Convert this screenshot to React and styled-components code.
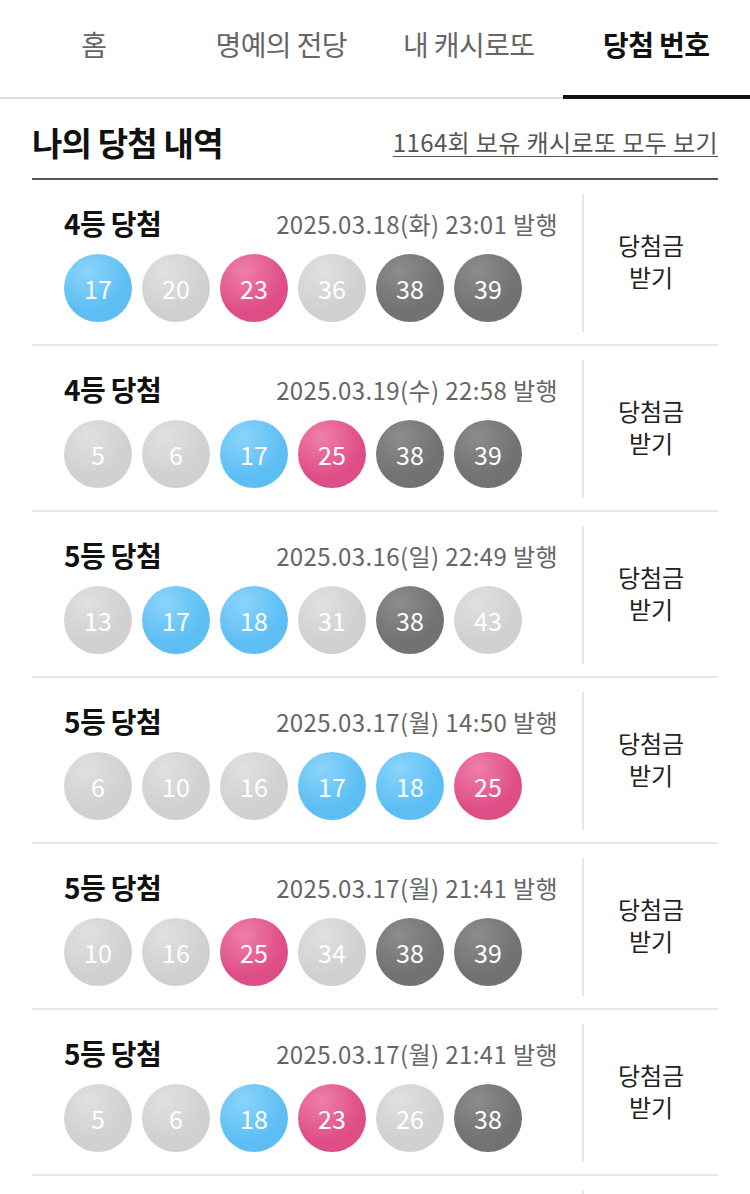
import React from 'react';
import styled, { createGlobalStyle } from 'styled-components';

const GlobalStyle = createGlobalStyle`
    * {
        box-sizing: border-box;
    }

    body {
        margin: 0;
        background: #fff;
        font-family: 'Noto Sans CJK KR', 'Noto Sans', sans-serif;
    }
`;

const tabs = ['홈', '명예의 전당', '내 캐시로또', '당첨 번호'];

const rows = [
    { rank: '4등 당첨', date: '2025.03.18(화) 23:01 발행', balls: [[17, 'blue'], [20, 'light'], [23, 'pink'], [36, 'light'], [38, 'dark'], [39, 'dark']] },
    { rank: '4등 당첨', date: '2025.03.19(수) 22:58 발행', balls: [[5, 'light'], [6, 'light'], [17, 'blue'], [25, 'pink'], [38, 'dark'], [39, 'dark']] },
    { rank: '5등 당첨', date: '2025.03.16(일) 22:49 발행', balls: [[13, 'light'], [17, 'blue'], [18, 'blue'], [31, 'light'], [38, 'dark'], [43, 'light']] },
    { rank: '5등 당첨', date: '2025.03.17(월) 14:50 발행', balls: [[6, 'light'], [10, 'light'], [16, 'light'], [17, 'blue'], [18, 'blue'], [25, 'pink']] },
    { rank: '5등 당첨', date: '2025.03.17(월) 21:41 발행', balls: [[10, 'light'], [16, 'light'], [25, 'pink'], [34, 'light'], [38, 'dark'], [39, 'dark']] },
    { rank: '5등 당첨', date: '2025.03.17(월) 21:41 발행', balls: [[5, 'light'], [6, 'light'], [18, 'blue'], [23, 'pink'], [26, 'light'], [38, 'dark']] },
];

const ballColors = {
    blue: ['#8ad4fa', '#5dbef4'],
    light: ['#e0e0e0', '#d0d0d0'],
    pink: ['#ef7fa8', '#df4d87'],
    dark: ['#8c8c8c', '#727272'],
};

function App() {
    return (
        <>
            <GlobalStyle />
            <Page>
                <TabBar>
                    {tabs.map((t, i) => (
                        <Tab key={t} $active={i === 3}>{t}</Tab>
                    ))}
                </TabBar>
                <Section>
                    <SectionHeader>
                        <SectionTitle>나의 당첨 내역</SectionTitle>
                        <AllLink>1164회 보유 캐시로또 모두 보기</AllLink>
                    </SectionHeader>
                    <List>
                        {rows.map((row, i) => (
                            <Row key={i}>
                                <RowMain>
                                    <RowTop>
                                        <Rank>{row.rank}</Rank>
                                        <IssuedAt>{row.date}</IssuedAt>
                                    </RowTop>
                                    <Balls>
                                        {row.balls.map(([n, c], j) => (
                                            <Ball key={j} $color={c}>{n}</Ball>
                                        ))}
                                    </Balls>
                                </RowMain>
                                <ClaimButton>당첨금<br />받기</ClaimButton>
                            </Row>
                        ))}
                        {/* next row, only its top edge shows below the fold */}
                        <Row>
                            <RowMain />
                            <ClaimButton />
                        </Row>
                    </List>
                </Section>
            </Page>
        </>
    );
}

export default App;

const Page = styled.div`
    width: 750px;
    height: 1194px;
    overflow: hidden;
    background: #fff;
`;

const TabBar = styled.div`
    display: grid;
    grid-template-columns: repeat(4, 1fr);
    height: 99px;
    border-bottom: 2px solid #dcdcdc;
`;

const Tab = styled.div`
    display: flex;
    align-items: center;
    justify-content: center;
    padding-bottom: 8px;
    font-size: 28px;
    letter-spacing: -0.6px;
    color: ${(p) => (p.$active ? '#111' : '#666')};
    font-weight: ${(p) => (p.$active ? 700 : 400)};
    border-bottom: 4px solid ${(p) => (p.$active ? '#111' : 'transparent')};
    margin-bottom: -2px;
`;

const Section = styled.div`
    padding: 0 32px;
`;

const SectionHeader = styled.div`
    display: flex;
    align-items: center;
    justify-content: space-between;
    height: 81px;
    padding-top: 6px;
    border-bottom: 2px solid #555;
`;

const SectionTitle = styled.h2`
    margin: 0;
    font-size: 33px;
    font-weight: 700;
    color: #111;
    letter-spacing: -0.8px;
`;

const AllLink = styled.a`
    font-size: 24px;
    color: #555;
    text-decoration: underline;
    text-decoration-thickness: 1px;
    text-underline-offset: 4px;
    letter-spacing: 0.4px;
`;

const List = styled.div`
    display: flex;
    flex-direction: column;
`;

const Row = styled.div`
    display: flex;
    height: 166px;
    padding: 14px 0 12px;
    border-bottom: 2px solid #e6e6e6;
`;

const RowMain = styled.div`
    flex: 1;
    padding: 8px 24px 0 32px;
    border-right: 2px solid #e6e6e6;
`;

const RowTop = styled.div`
    display: flex;
    align-items: center;
    justify-content: space-between;
    height: 42px;
`;

const Rank = styled.div`
    font-size: 28px;
    font-weight: 700;
    color: #111;
    letter-spacing: -0.6px;
`;

const IssuedAt = styled.div`
    font-size: 24px;
    color: #666;
    letter-spacing: 0.4px;
`;

const Balls = styled.div`
    display: flex;
    gap: 10px;
    margin-top: 10px;
`;

const Ball = styled.div`
    width: 68px;
    height: 68px;
    border-radius: 50%;
    display: flex;
    align-items: center;
    justify-content: center;
    font-size: 25px;
    color: #fff;
    background: radial-gradient(circle at 35% 25%, ${(p) => ballColors[p.$color][0]} 0%, ${(p) => ballColors[p.$color][1]} 60%);
`;

const ClaimButton = styled.div`
    width: 134px;
    display: flex;
    align-items: center;
    justify-content: center;
    text-align: center;
    font-size: 24px;
    line-height: 32px;
    color: #222;
    padding-bottom: 4px;
`;
